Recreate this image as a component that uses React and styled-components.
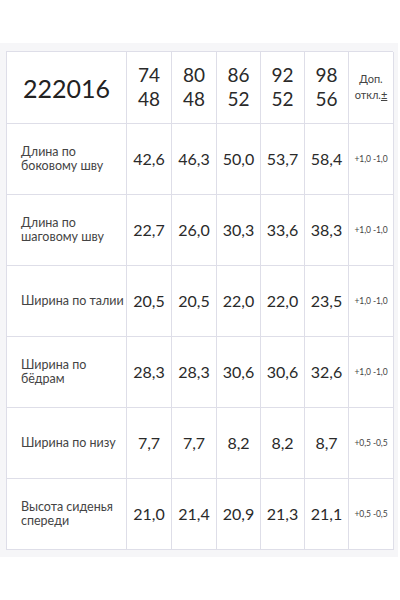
import React from "react";
import styled, { createGlobalStyle } from "styled-components";

const GlobalStyle = createGlobalStyle`
  body {
    margin: 0;
    background: #ffffff;
    font-family: Lato, "Open Sans", "Liberation Sans", sans-serif;
  }
`;

const sizes = [
  ["74", "48"],
  ["80", "48"],
  ["86", "52"],
  ["92", "52"],
  ["98", "56"],
];

const rows = [
  { name: "Длина по боковому шву", values: ["42,6", "46,3", "50,0", "53,7", "58,4"], tol: "+1,0 -1,0" },
  { name: "Длина по шаговому шву", values: ["22,7", "26,0", "30,3", "33,6", "38,3"], tol: "+1,0 -1,0" },
  { name: "Ширина по талии", values: ["20,5", "20,5", "22,0", "22,0", "23,5"], tol: "+1,0 -1,0" },
  { name: "Ширина по бёдрам", values: ["28,3", "28,3", "30,6", "30,6", "32,6"], tol: "+1,0 -1,0" },
  { name: "Ширина по низу", values: ["7,7", "7,7", "8,2", "8,2", "8,7"], tol: "+0,5 -0,5" },
  { name: "Высота сиденья спереди", values: ["21,0", "21,4", "20,9", "21,3", "21,1"], tol: "+0,5 -0,5" },
];

export default function App() {
  return (
    <>
      <GlobalStyle />
      <Page>
        <Panel>
          <Table>
            <ModelCell>222016</ModelCell>
            {sizes.map((s, i) => (
              <SizeCell key={i}>
                <span>{s[0]}</span>
                <span>{s[1]}</span>
              </SizeCell>
            ))}
            <TolHead>
              <span>Доп.</span>
              <span>
                откл.<u>±</u>
              </span>
            </TolHead>
            {rows.map((r) => (
              <React.Fragment key={r.name}>
                <LabelCell>{r.name}</LabelCell>
                {r.values.map((v, i) => (
                  <ValueCell key={i}>{v}</ValueCell>
                ))}
                <TolCell>{r.tol}</TolCell>
              </React.Fragment>
            ))}
          </Table>
        </Panel>
      </Page>
    </>
  );
}

const Page = styled.div`
  padding-top: 43px;
  width: 400px;
`;

const Panel = styled.div`
  width: 398px;
  box-sizing: border-box;
  background: #f6f6f8;
  padding: 8px 5px 7px 6px;
`;

const Table = styled.div`
  display: grid;
  grid-template-columns: 120px 45px 45px 44px 44px 44px 45px;
  grid-template-rows: 72px repeat(6, 71px);
  width: 387px;
  box-sizing: border-box;
  background: #ffffff;
  border-left: 1px solid #dedee8;
  border-top: 1px solid #dedee8;
`;

const Cell = styled.div`
  box-sizing: border-box;
  border-right: 1px solid #dedee8;
  border-bottom: 1px solid #dedee8;
  display: flex;
  align-items: center;
  justify-content: center;
  color: #2a2a2a;
`;

const ModelCell = styled(Cell)`
  justify-content: flex-start;
  padding-left: 16px;
  font-size: 25px;
  color: #222;
`;

const SizeCell = styled(Cell)`
  flex-direction: column;
  font-size: 19px;
  line-height: 24px;
  padding-bottom: 2px;
`;

const TolHead = styled(Cell)`
  flex-direction: column;
  font-size: 11px;
  line-height: 16px;
  color: #444;
  padding-bottom: 2px;

  u {
    text-decoration: underline;
    text-underline-offset: 1px;
  }
`;

const LabelCell = styled(Cell)`
  justify-content: flex-start;
  padding: 0 0 0 14px;
  font-size: 12.5px;
  line-height: 14px;
  color: #444;
`;

const ValueCell = styled(Cell)`
  font-size: 16px;
  padding-bottom: 1px;
`;

const TolCell = styled(Cell)`
  font-size: 8.5px;
  color: #444;
  white-space: nowrap;
  letter-spacing: -0.1px;
`;
